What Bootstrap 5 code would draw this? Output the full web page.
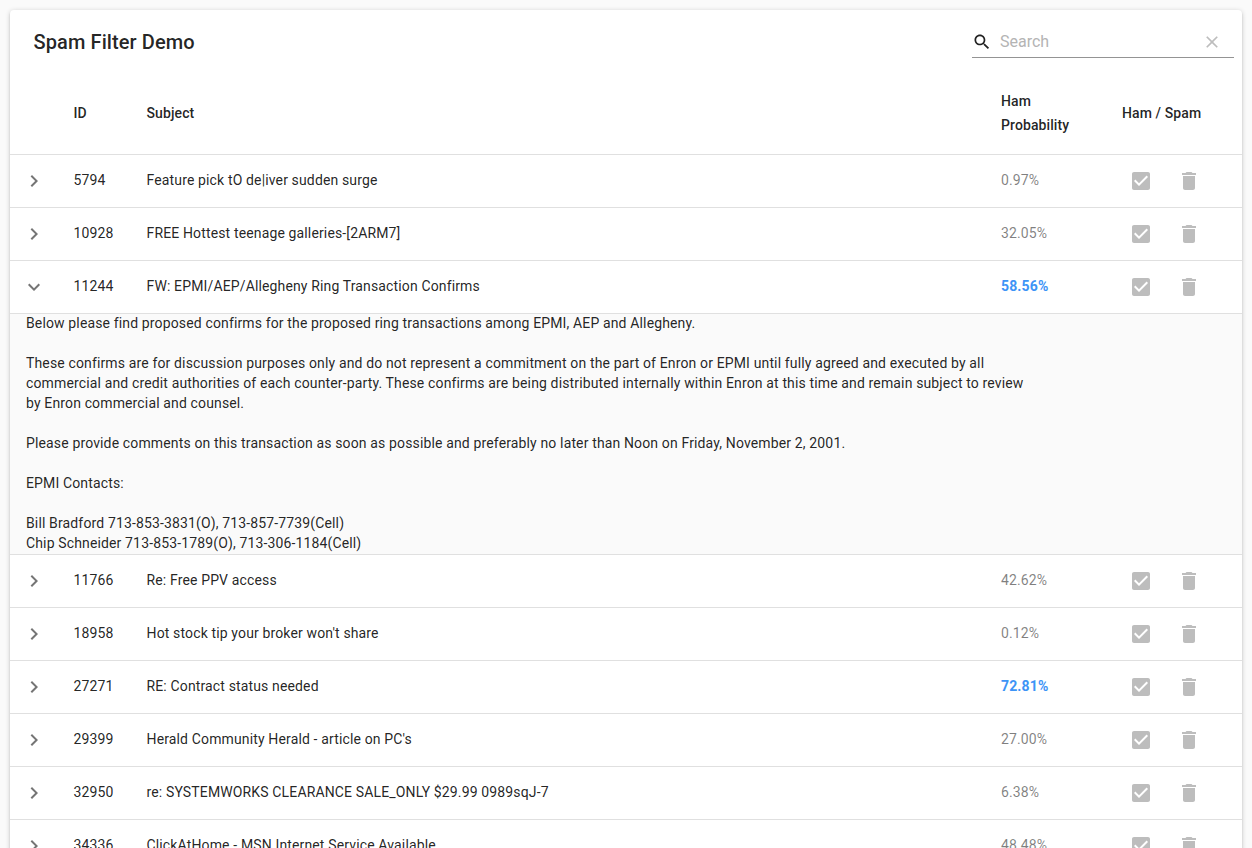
<!DOCTYPE html>
<html lang="en">
<head>
    <meta charset="UTF-8">
    <meta name="viewport" content="width=device-width, initial-scale=1.0">
    <title>Spam Filter Demo</title>
    <link href="https://cdn.jsdelivr.net/npm/bootstrap@5.3.0/dist/css/bootstrap.min.css" rel="stylesheet">
    <style>
        html, body { height: 100%; overflow: hidden; }
        body {
            background-color: #fafafa;
            font-family: Roboto, "Liberation Sans", sans-serif;
            font-size: 14px;
            color: rgba(0, 0, 0, .87);
            padding: 10px;
        }
        .demo-sheet {
            background: #fff;
            border-radius: 4px;
            box-shadow: 0 1px 5px rgba(0, 0, 0, .2), 0 2px 2px rgba(0, 0, 0, .12);
        }
        .demo-toolbar { height: 62px; padding-left: 23.5px; padding-right: 8px; }
        .demo-title { font-size: 20px; font-weight: 500; line-height: 32px; margin: 0; letter-spacing: .1px; }
        .search-box {
            width: 262px;
            height: 32px;
            border-bottom: 1px solid #949494;
            color: #bdbdbd;
            font-size: 16px;
        }
        .search-input {
            border: 0;
            outline: 0;
            flex: 1;
            min-width: 0;
            padding: 0 0 0 8px;
            font: inherit;
            background: transparent;
        }
        .search-input::placeholder { color: #b4b4b4; opacity: 1; }
        .mail-table { table-layout: fixed; width: 100%; margin: 0; border-collapse: collapse; }
        .mail-table th, .mail-table td { padding: 0 16px; border-bottom: 1px solid #e0e0e0; vertical-align: middle; }
        .mail-table thead th { height: 82px; font-weight: 500; line-height: 24px; letter-spacing: .1px; }
        .mail-table tbody td { height: 53px; letter-spacing: .14px; }
        .col-toggle { width: 47.5px; }
        .col-id { width: 73px; }
        .col-prob { width: 121px; }
        .col-action { width: 136px; }
        .mail-table td.cell-toggle { padding: 0 0 0 12px; }
        .mail-table td.cell-action { padding: 0 0 0 23px; }
        .mail-table tbody td.prob { color: rgba(0, 0, 0, .5); }
        .mail-table tbody td.prob-ham { color: #3d94f6; font-weight: 700; }
        .ico-chevron { fill: #757575; display: block; }
        .ico-action { fill: #bdbdbd; display: block; }
        .ico-search { fill: #212121; flex: none; }
        .ico-close { fill: #bdbdbd; flex: none; margin-right: 12px; }
        .action-gap { gap: 24px; }
        .mail-table td.cell-body { height: auto; padding: 0; background: #fafafa; }
        .mail-body {
            white-space: pre-line;
            line-height: 20px;
            padding: 0 16px 1px;
            margin-top: -1px;
            max-width: 1041px;
            letter-spacing: .14px;
        }
    </style>
</head>
<body>
    <svg width="0" height="0" class="d-none">
        <symbol id="i-right" viewBox="0 0 24 24"><path d="M10 6L8.59 7.41 13.17 12l-4.58 4.59L10 18l6-6z"/></symbol>
        <symbol id="i-down" viewBox="0 0 24 24"><path d="M16.59 8.59L12 13.17 7.41 8.59 6 10l6 6 6-6z"/></symbol>
        <symbol id="i-check" viewBox="0 0 24 24"><path d="M19 3H5c-1.11 0-2 .9-2 2v14c0 1.1.89 2 2 2h14c1.11 0 2-.9 2-2V5c0-1.1-.89-2-2-2zm-9 14l-5-5 1.41-1.41L10 14.17l7.59-7.59L19 8l-9 9z"/></symbol>
        <symbol id="i-trash" viewBox="0 0 24 24"><path d="M6 19c0 1.1.9 2 2 2h8c1.1 0 2-.9 2-2V7H6v12zM19 4h-3.5l-1-1h-5l-1 1H5v2h14V4z"/></symbol>
    </svg>

    <div class="demo-sheet">
        <div class="demo-toolbar d-flex justify-content-between align-items-start">
            <h1 class="demo-title mt-3">Spam Filter Demo</h1>
            <div class="search-box d-flex align-items-center mt-3">
                <svg class="ico-search" width="20" height="20" viewBox="0 0 24 24"><path d="M15.5 14h-.79l-.28-.27C15.41 12.59 16 11.11 16 9.5 16 5.91 13.09 3 9.5 3S3 5.91 3 9.5 5.91 16 9.5 16c1.61 0 3.09-.59 4.23-1.57l.27.28v.79l5 4.99L20.49 19l-4.99-5zm-6 0C7.01 14 5 11.99 5 9.5S7.01 5 9.5 5 14 7.01 14 9.5 11.99 14 9.5 14z"/></svg>
                <input class="search-input" type="text" placeholder="Search">
                <svg class="ico-close" width="20" height="20" viewBox="0 0 24 24"><path d="M19 6.41L17.59 5 12 10.59 6.41 5 5 6.41 10.59 12 5 17.59 6.41 19 12 13.41 17.59 19 19 17.59 13.41 12z"/></svg>
            </div>
        </div>

        <table class="mail-table">
            <colgroup>
                <col class="col-toggle"><col class="col-id"><col><col class="col-prob"><col class="col-action">
            </colgroup>
            <thead>
                <tr>
                    <th></th><th>ID</th><th>Subject</th><th>Ham Probability</th><th>Ham / Spam</th>
                </tr>
            </thead>
            <tbody>
                <tr>
                    <td class="cell-toggle"><svg class="ico-chevron" width="24" height="24"><use href="#i-right"/></svg></td>
                    <td>5794</td><td>Feature pick tO de|iver sudden surge</td><td class="prob">0.97%</td>
                    <td class="cell-action"><div class="d-flex action-gap"><svg class="ico-action" width="24" height="24"><use href="#i-check"/></svg><svg class="ico-action" width="24" height="24"><use href="#i-trash"/></svg></div></td>
                </tr>
                <tr>
                    <td class="cell-toggle"><svg class="ico-chevron" width="24" height="24"><use href="#i-right"/></svg></td>
                    <td>10928</td><td>FREE Hottest teenage galleries-[2ARM7]</td><td class="prob">32.05%</td>
                    <td class="cell-action"><div class="d-flex action-gap"><svg class="ico-action" width="24" height="24"><use href="#i-check"/></svg><svg class="ico-action" width="24" height="24"><use href="#i-trash"/></svg></div></td>
                </tr>
                <tr>
                    <td class="cell-toggle"><svg class="ico-chevron" width="24" height="24"><use href="#i-down"/></svg></td>
                    <td>11244</td><td>FW: EPMI/AEP/Allegheny Ring Transaction Confirms</td><td class="prob-ham">58.56%</td>
                    <td class="cell-action"><div class="d-flex action-gap"><svg class="ico-action" width="24" height="24"><use href="#i-check"/></svg><svg class="ico-action" width="24" height="24"><use href="#i-trash"/></svg></div></td>
                </tr>
                <tr>
                    <td colspan="5" class="cell-body"><div class="mail-body">Below please find proposed confirms for the proposed ring transactions among EPMI, AEP and Allegheny.

These confirms are for discussion purposes only and do not represent a commitment on the part of Enron or EPMI until fully agreed and executed by all commercial and credit authorities of each counter-party. These confirms are being distributed internally within Enron at this time and remain subject to review by Enron commercial and counsel.

Please provide comments on this transaction as soon as possible and preferably no later than Noon on Friday, November 2, 2001.

EPMI Contacts:

Bill Bradford 713-853-3831(O), 713-857-7739(Cell)
Chip Schneider 713-853-1789(O), 713-306-1184(Cell)</div></td>
                </tr>
                <tr>
                    <td class="cell-toggle"><svg class="ico-chevron" width="24" height="24"><use href="#i-right"/></svg></td>
                    <td>11766</td><td>Re: Free PPV access</td><td class="prob">42.62%</td>
                    <td class="cell-action"><div class="d-flex action-gap"><svg class="ico-action" width="24" height="24"><use href="#i-check"/></svg><svg class="ico-action" width="24" height="24"><use href="#i-trash"/></svg></div></td>
                </tr>
                <tr>
                    <td class="cell-toggle"><svg class="ico-chevron" width="24" height="24"><use href="#i-right"/></svg></td>
                    <td>18958</td><td>Hot stock tip your broker won't share</td><td class="prob">0.12%</td>
                    <td class="cell-action"><div class="d-flex action-gap"><svg class="ico-action" width="24" height="24"><use href="#i-check"/></svg><svg class="ico-action" width="24" height="24"><use href="#i-trash"/></svg></div></td>
                </tr>
                <tr>
                    <td class="cell-toggle"><svg class="ico-chevron" width="24" height="24"><use href="#i-right"/></svg></td>
                    <td>27271</td><td>RE: Contract status needed</td><td class="prob-ham">72.81%</td>
                    <td class="cell-action"><div class="d-flex action-gap"><svg class="ico-action" width="24" height="24"><use href="#i-check"/></svg><svg class="ico-action" width="24" height="24"><use href="#i-trash"/></svg></div></td>
                </tr>
                <tr>
                    <td class="cell-toggle"><svg class="ico-chevron" width="24" height="24"><use href="#i-right"/></svg></td>
                    <td>29399</td><td>Herald Community Herald - article on PC's</td><td class="prob">27.00%</td>
                    <td class="cell-action"><div class="d-flex action-gap"><svg class="ico-action" width="24" height="24"><use href="#i-check"/></svg><svg class="ico-action" width="24" height="24"><use href="#i-trash"/></svg></div></td>
                </tr>
                <tr>
                    <td class="cell-toggle"><svg class="ico-chevron" width="24" height="24"><use href="#i-right"/></svg></td>
                    <td>32950</td><td>re: SYSTEMWORKS CLEARANCE SALE_ONLY $29.99 0989sqJ-7</td><td class="prob">6.38%</td>
                    <td class="cell-action"><div class="d-flex action-gap"><svg class="ico-action" width="24" height="24"><use href="#i-check"/></svg><svg class="ico-action" width="24" height="24"><use href="#i-trash"/></svg></div></td>
                </tr>
                <tr>
                    <td class="cell-toggle"><svg class="ico-chevron" width="24" height="24"><use href="#i-right"/></svg></td>
                    <td>34336</td><td>ClickAtHome - MSN Internet Service Available</td><td class="prob">48.48%</td>
                    <td class="cell-action"><div class="d-flex action-gap"><svg class="ico-action" width="24" height="24"><use href="#i-check"/></svg><svg class="ico-action" width="24" height="24"><use href="#i-trash"/></svg></div></td>
                </tr>
            </tbody>
        </table>
    </div>

    <script src="https://cdn.jsdelivr.net/npm/bootstrap@5.3.0/dist/js/bootstrap.bundle.min.js"></script>
</body>
</html>
